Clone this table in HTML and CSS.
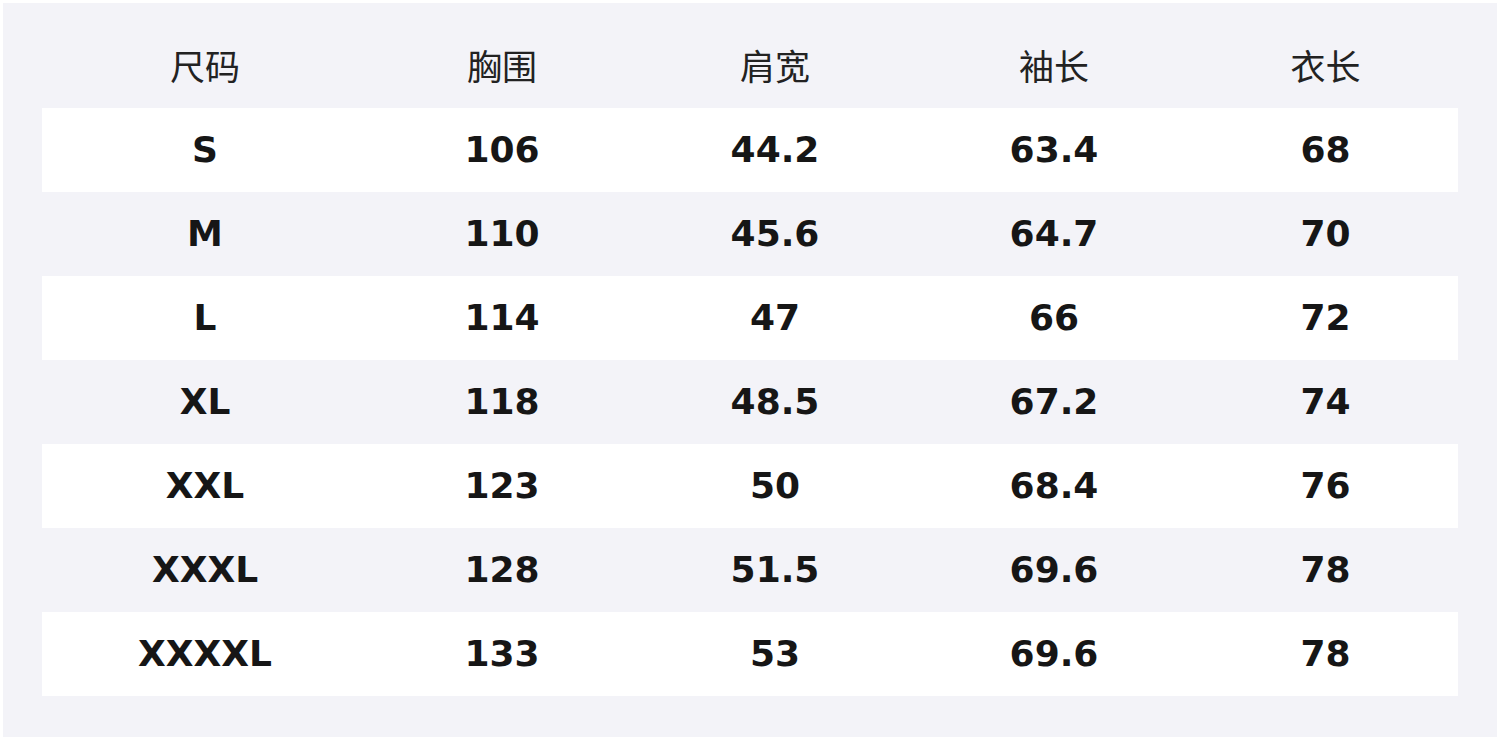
FILE: index.html
```html
<!DOCTYPE html>
<html lang="zh">
<head>
<meta charset="utf-8">
<link rel="stylesheet" href="styles.css">
</head>
<body>
<div class="panel">
  <div class="row head">
    <div class="cell">尺码</div>
    <div class="cell">胸围</div>
    <div class="cell">肩宽</div>
    <div class="cell">袖长</div>
    <div class="cell">衣长</div>
  </div>
  <div class="row white"><div class="cell">S</div><div class="cell">106</div><div class="cell">44.2</div><div class="cell">63.4</div><div class="cell">68</div></div>
  <div class="row"><div class="cell">M</div><div class="cell">110</div><div class="cell">45.6</div><div class="cell">64.7</div><div class="cell">70</div></div>
  <div class="row white"><div class="cell">L</div><div class="cell">114</div><div class="cell">47</div><div class="cell">66</div><div class="cell">72</div></div>
  <div class="row"><div class="cell">XL</div><div class="cell">118</div><div class="cell">48.5</div><div class="cell">67.2</div><div class="cell">74</div></div>
  <div class="row white"><div class="cell">XXL</div><div class="cell">123</div><div class="cell">50</div><div class="cell">68.4</div><div class="cell">76</div></div>
  <div class="row"><div class="cell">XXXL</div><div class="cell">128</div><div class="cell">51.5</div><div class="cell">69.6</div><div class="cell">78</div></div>
  <div class="row white"><div class="cell">XXXXL</div><div class="cell">133</div><div class="cell">53</div><div class="cell">69.6</div><div class="cell">78</div></div>
</div>
</body>
</html>
```
FILE: styles.css
```css
html, body {
  margin: 0;
  padding: 0;
  background: #ffffff;
}
body {
  padding: 3px;
  width: 1500px;
  height: 740px;
  box-sizing: border-box;
}
.panel {
  background: #f3f3f8;
  height: 734px;
  width: 1494px;
  box-sizing: border-box;
  padding: 24px 39px 41px 39px;
}
.row {
  display: grid;
  grid-template-columns: 326px 268px 278px 280px 263px;
  height: 84px;
  align-items: center;
  font-family: "DejaVu Sans", sans-serif;
  font-weight: bold;
  font-size: 36px;
  color: #161616;
}
.row.white {
  background: #ffffff;
}
.row.head {
  height: 81px;
  align-items: start;
  font-family: "Noto Sans CJK SC", sans-serif;
  font-weight: normal;
  font-size: 35px;
  color: #222222;
}
.cell {
  text-align: center;
  line-height: 1;
}
.row.head .cell {
  line-height: 1.1;
  padding-top: 19px;
}
```
